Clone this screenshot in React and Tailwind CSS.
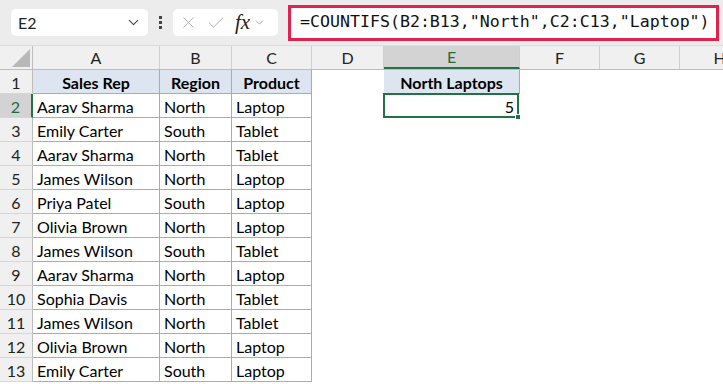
import { ChevronDown, X, Check } from 'lucide-react'

const cols = [
  { key: 'A', w: 'w-[127px]' },
  { key: 'B', w: 'w-[72px]' },
  { key: 'C', w: 'w-[80px]' },
  { key: 'D', w: 'w-[72px]' },
  { key: 'E', w: 'w-[136px]' },
  { key: 'F', w: 'w-[80px]' },
  { key: 'G', w: 'w-[80px]' },
  { key: 'H', w: 'w-[80px]' },
]

const rows = [
  ['Aarav Sharma', 'North', 'Laptop'],
  ['Emily Carter', 'South', 'Tablet'],
  ['Aarav Sharma', 'North', 'Tablet'],
  ['James Wilson', 'North', 'Laptop'],
  ['Priya Patel', 'South', 'Laptop'],
  ['Olivia Brown', 'North', 'Laptop'],
  ['James Wilson', 'South', 'Tablet'],
  ['Aarav Sharma', 'North', 'Laptop'],
  ['Sophia Davis', 'North', 'Tablet'],
  ['James Wilson', 'North', 'Tablet'],
  ['Olivia Brown', 'North', 'Laptop'],
  ['Emily Carter', 'South', 'Laptop'],
]

function Toolbar() {
  return (
    <div className="h-[46px] bg-[#ececec] flex items-center pl-[11px] border-b border-[#dcdcdc]">
      <div className="w-[137px] h-[27px] bg-white rounded-[5px] flex items-center justify-between pl-[7px] pr-[6px] text-[16px] text-[#222]">
        <span>E2</span>
        <ChevronDown size={17} strokeWidth={1.6} className="text-[#444]" />
      </div>
      <div className="ml-[11px] flex flex-col gap-[2px]">
        <div className="w-[3px] h-[3px] bg-[#444]" />
        <div className="w-[3px] h-[3px] bg-[#444]" />
        <div className="w-[3px] h-[3px] bg-[#444]" />
      </div>
      <div className="ml-[11px] w-[105px] h-[27px] bg-white rounded-[5px] flex items-center pl-[6px] text-[#b0b0b0]">
        <X size={19} strokeWidth={1.2} />
        <Check size={20} strokeWidth={1.2} className="ml-[8px]" />
        <span className="ml-[9px] text-[#222] italic text-[21px] font-['Liberation_Serif',serif] leading-none">fx</span>
        <ChevronDown size={13} strokeWidth={1.6} className="ml-[3px] text-[#999]" />
      </div>
      <div className="ml-[10px] w-[431px] h-[36px] bg-white border-[3px] border-[#e0234e] flex items-center pl-[9px] text-[16.6px] text-[#111] font-['DejaVu_Sans_Mono',monospace]">
        =COUNTIFS(B2:B13,"North",C2:C13,"Laptop")
      </div>
    </div>
  )
}

function HeaderRow() {
  return (
    <div className="flex h-[24px] bg-[#f0f0f0] border-b border-[#bdbdbd]">
      <div className="w-[33px] shrink-0 border-r border-[#bdbdbd] relative">
        <div className="absolute right-[2px] bottom-[2px] w-0 h-0 border-l-[18px] border-l-transparent border-b-[18px] border-b-[#b8b8b8]" />
      </div>
      {cols.map(c => (
        <div key={c.key}
          className={`${c.w} shrink-0 flex items-center justify-center text-[16px] border-r border-[#cfcfcf] ${c.key === 'E' ? 'bg-[#d3d3d3] text-[#1e6b3f] border-b-2 border-b-[#217346]' : 'text-[#222]'}`}>
          {c.key}
        </div>
      ))}
    </div>
  )
}

function RowHead({ n }) {
  const sel = n === 2
  return (
    <div className={`w-[33px] shrink-0 flex items-center justify-center text-[16px] pt-[2px] border-b border-[#d6d6d6] ${sel ? 'bg-[#d3d3d3] text-[#1e6b3f] border-r-2 border-r-[#217346]' : 'bg-[#f0f0f0] text-[#222] border-r border-r-[#bdbdbd]'}`}>
      {n}
    </div>
  )
}

function Cell({ w, children, head, bordered }) {
  return (
    <div className={`${w} shrink-0 flex items-center pt-[2px] px-[4px] text-[16px] text-black truncate ${head ? 'bg-[#dde6f0] font-bold justify-center' : ''} ${bordered ? 'border-r border-b border-[#ababab]' : ''}`}>
      {children}
    </div>
  )
}

export default function App() {
  return (
    <div className="w-[723px] h-[384px] overflow-hidden bg-white font-['Lato',sans-serif]">
      <Toolbar />
      <HeaderRow />
      <div className="flex h-[24px]">
        <RowHead n={1} />
        <Cell w="w-[127px]" head bordered>Sales Rep</Cell>
        <Cell w="w-[72px]" head bordered>Region</Cell>
        <Cell w="w-[80px]" head bordered>Product</Cell>
        <Cell w="w-[72px]" />
        <Cell w="w-[136px]" head bordered>North Laptops</Cell>
      </div>
      {rows.map((r, i) => (
        <div key={i} className="flex h-[24px]">
          <RowHead n={i + 2} />
          <Cell w="w-[127px]" bordered>{r[0]}</Cell>
          <Cell w="w-[72px]" bordered>{r[1]}</Cell>
          <Cell w="w-[80px]" bordered>{r[2]}</Cell>
          <Cell w="w-[72px]" />
          {i === 0 && (
            <div className="w-[136px] shrink-0 relative border-2 border-[#217346] flex items-center justify-end pt-[2px] pr-[3px] text-[16px] -ml-[1px] -mt-[1px] h-[25px]">
              5
              <div className="absolute -right-[4px] -bottom-[4px] w-[6px] h-[6px] bg-[#217346] border border-white" />
            </div>
          )}
        </div>
      ))}
    </div>
  )
}
